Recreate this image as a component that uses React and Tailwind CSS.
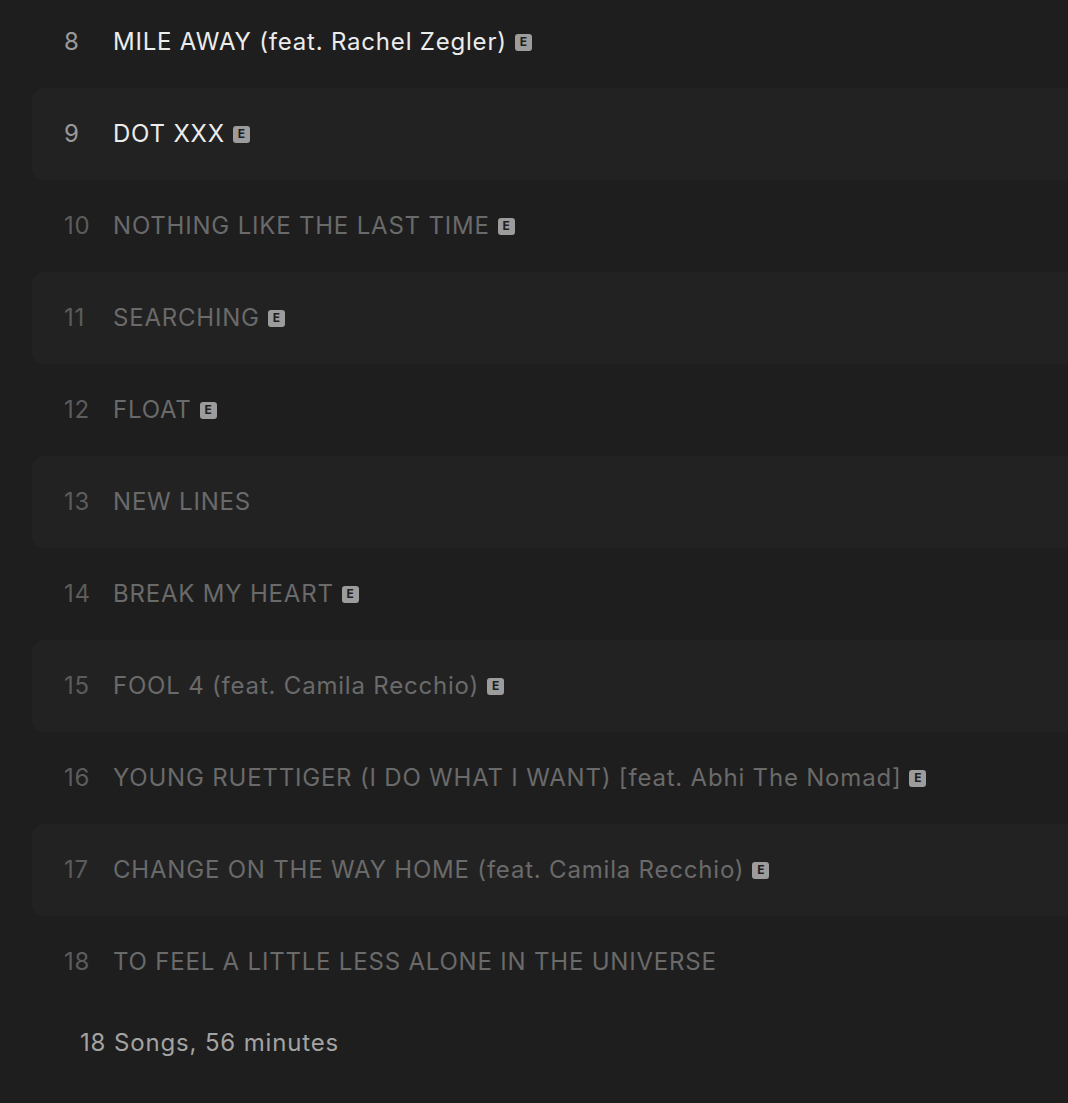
import React from "react";

const songs = [
  { n: 8, title: "MILE AWAY (feat. Rachel Zegler)", explicit: true, active: true },
  { n: 9, title: "DOT XXX", explicit: true, active: true },
  { n: 10, title: "NOTHING LIKE THE LAST TIME", explicit: true },
  { n: 11, title: "SEARCHING", explicit: true },
  { n: 12, title: "FLOAT", explicit: true },
  { n: 13, title: "NEW LINES", explicit: false },
  { n: 14, title: "BREAK MY HEART", explicit: true },
  { n: 15, title: "FOOL 4 (feat. Camila Recchio)", explicit: true },
  { n: 16, title: "YOUNG RUETTIGER (I DO WHAT I WANT) [feat. Abhi The Nomad]", explicit: true },
  { n: 17, title: "CHANGE ON THE WAY HOME (feat. Camila Recchio)", explicit: true },
  { n: 18, title: "TO FEEL A LITTLE LESS ALONE IN THE UNIVERSE", explicit: false },
];

function Explicit() {
  return (
    <span className="ml-2 inline-flex h-[17px] w-[17px] shrink-0 items-center justify-center rounded-[3px] bg-[#9c9c9c] text-[12px] font-bold leading-none tracking-normal text-[#1e1e1e]">
      E
    </span>
  );
}

export default function App() {
  return (
    <div
      className="min-h-screen w-full overflow-hidden bg-[#1e1e1e]"
      style={{ fontFamily: "Inter, 'Noto Sans', sans-serif" }}
    >
      <div className="ml-8 w-[1100px]">
        <div className="-mt-[4px]">
          {songs.map((s, i) => (
            <div
              key={s.n}
              className={
                "flex h-[92px] items-center rounded-xl pl-8 text-[24px] tracking-[0.8px] " +
                (i % 2 === 1 ? "bg-[#222222]" : "")
              }
            >
              <span
                className={
                  "w-[49px] shrink-0 " +
                  (s.active ? "text-[#9a9a9a]" : "text-[#5c5c5c]")
                }
              >
                {s.n}
              </span>
              <span className={s.active ? "text-[#ececec]" : "text-[#6a6a6a]"}>
                {s.title}
              </span>
              {s.explicit && <Explicit />}
            </div>
          ))}
        </div>
        <div className="mt-[17px] pl-12 text-[24px] tracking-[0.85px] text-[#a3a3a3]">
          18 Songs, 56 minutes
        </div>
      </div>
    </div>
  );
}
